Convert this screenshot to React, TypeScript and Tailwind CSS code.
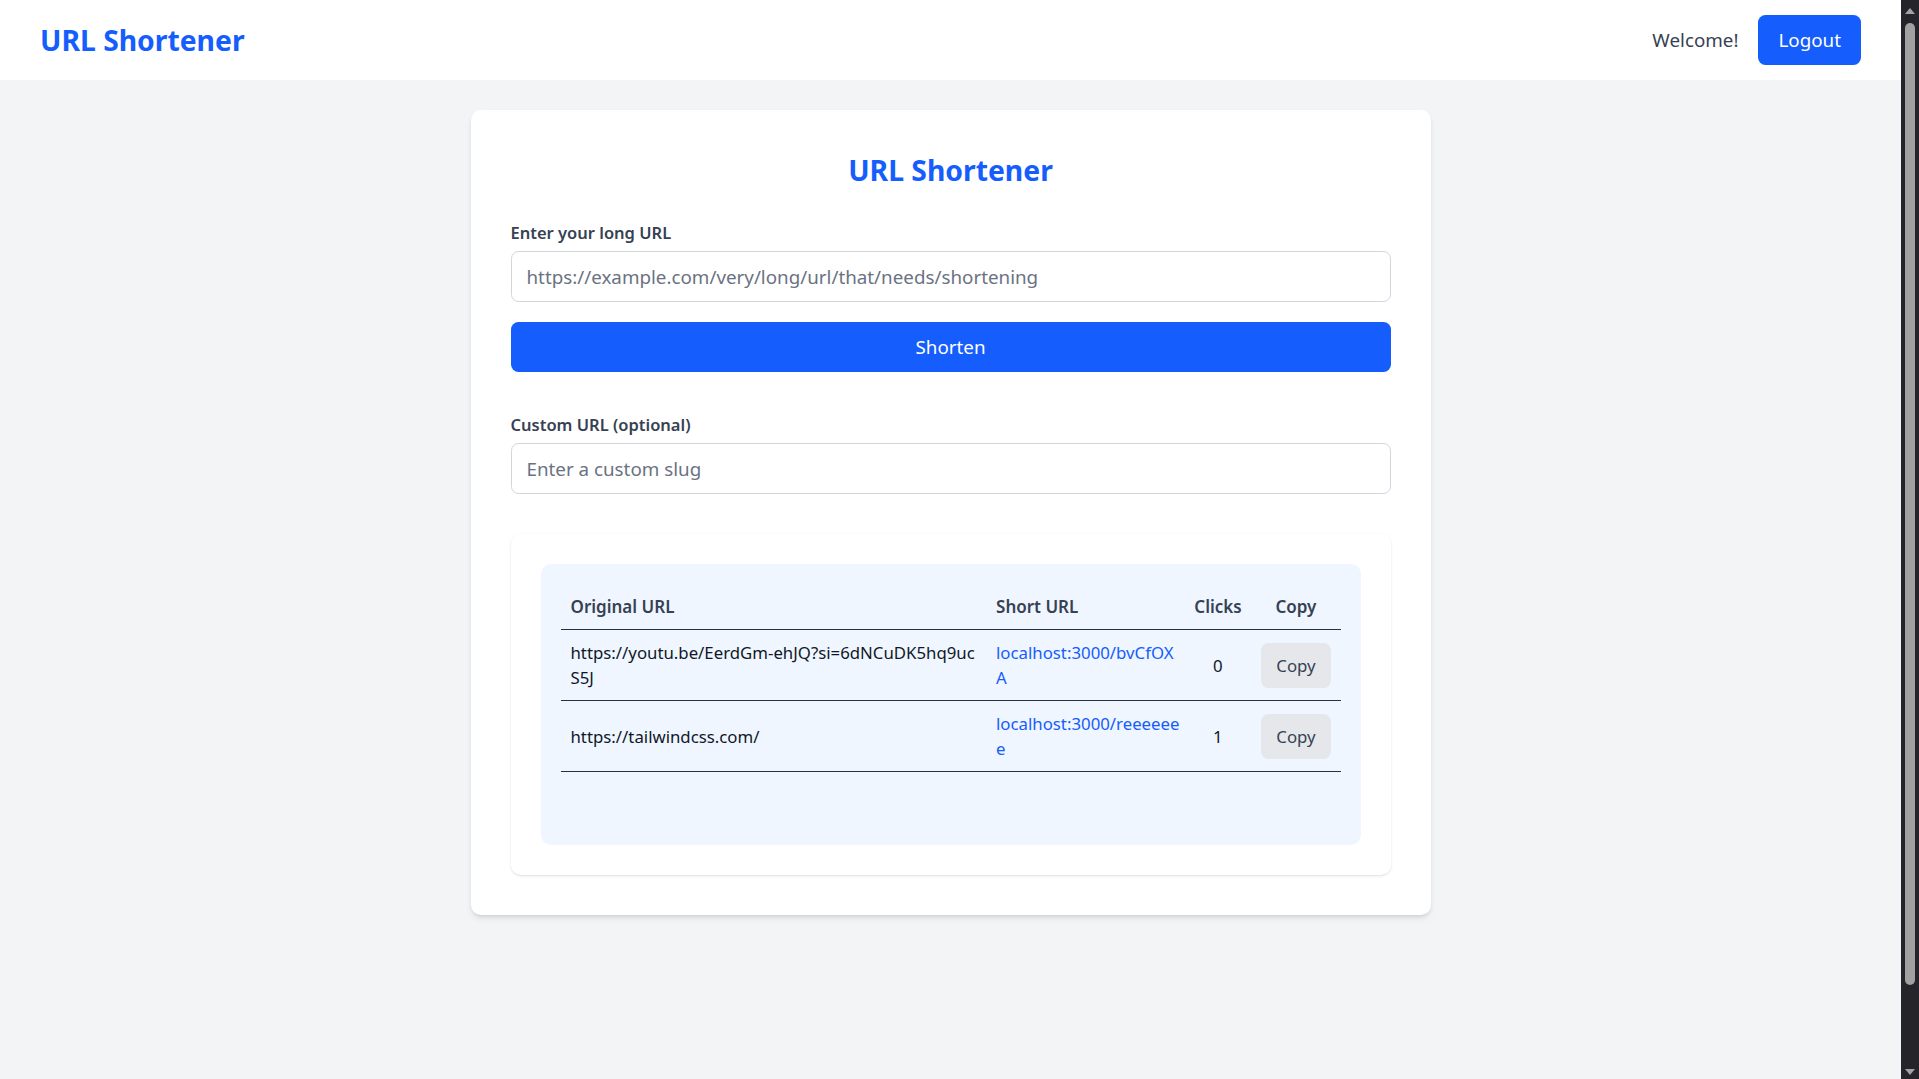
import React from "react";

const rows = [
  {
    original: ["https://youtu.be/EerdGm-ehJQ?si=6dNCuDK5hq9uc", "S5J"],
    short: ["localhost:3000/bvCfOX", "A"],
    clicks: 0,
  },
  {
    original: ["https://tailwindcss.com/"],
    short: ["localhost:3000/reeeeee", "e"],
    clicks: 1,
  },
];

function Scrollbar() {
  return (
    <div className="w-[18px] shrink-0 h-screen bg-[#25242a] flex flex-col items-center">
      <svg width="10" height="7" viewBox="0 0 10 7" className="mt-[7px]">
        <path d="M0 7 L5 1 L10 7 Z" fill="#a3a3a3" />
      </svg>
      <div className="mt-[9px] h-[962px] w-[10px] rounded-full bg-[#a1a1a1]" />
      <div className="flex-1" />
      <svg width="10" height="7" viewBox="0 0 10 7" className="mb-[3px]">
        <path d="M0 0 L10 0 L5 6 Z" fill="#a3a3a3" />
      </svg>
    </div>
  );
}

export default function App() {
  return (
    <div className="flex h-screen overflow-hidden bg-[#f3f4f6]">
      <div className="flex-1 min-w-0 h-screen overflow-hidden font-['Noto_Sans',sans-serif] text-gray-900">
        <nav className="h-20 bg-white px-10 flex items-center justify-between">
          <h1 className="text-[28.3px] leading-[40px] font-bold text-blue-600">URL Shortener</h1>
          <div className="flex items-center gap-5">
            <span className="text-[18.8px] leading-[30px] text-gray-700">Welcome!</span>
            <button className="bg-blue-600 text-white text-[18.8px] leading-[30px] px-5 py-2.5 rounded-[7.5px]">
              Logout
            </button>
          </div>
        </nav>
        <main className="min-h-screen pt-7.5 flex flex-col items-center">
          <div className="w-240 bg-white rounded-[10px] shadow-md p-10">
            <h2 className="text-[28.3px] leading-[40px] font-bold text-blue-600 text-center mb-7.5">
              URL Shortener
            </h2>
            <label className="block text-[16.5px] leading-[25px] font-semibold text-gray-700 mb-1.5">
              Enter your long URL
            </label>
            <input
              type="text"
              placeholder="https://example.com/very/long/url/that/needs/shortening"
              className="w-full h-[51px] border border-gray-300 rounded-[7.5px] px-[15px] text-[18.8px] placeholder:text-gray-500 outline-none"
            />
            <button className="mt-5 w-full h-[50px] bg-blue-600 text-white text-[18.8px] rounded-[7.5px]">
              Shorten
            </button>
            <label className="block mt-10 text-[16.5px] leading-[25px] font-semibold text-gray-700 mb-1.5">
              Custom URL (optional)
            </label>
            <input
              type="text"
              placeholder="Enter a custom slug"
              className="w-full h-[51px] border border-gray-300 rounded-[7.5px] px-[15px] text-[18.8px] placeholder:text-gray-500 outline-none"
            />
            <div className="mt-10 rounded-[10px] shadow-sm p-7.5">
              <div className="bg-blue-50 rounded-[10px] px-5 pt-5 pb-[73px]">
                <table className="w-full table-fixed border-collapse text-[16.8px] leading-[25px]">
                  <colgroup>
                    <col className="w-[425px]" />
                    <col className="w-[198px]" />
                    <col className="w-[67px]" />
                    <col className="w-[89px]" />
                  </colgroup>
                  <thead>
                    <tr className="border-b border-[#2b303b] text-gray-700">
                      <th className="px-2.5 py-2.5 text-left font-semibold text-[17px]">Original URL</th>
                      <th className="px-2.5 py-2.5 text-left font-semibold text-[17px]">Short URL</th>
                      <th className="px-2.5 py-2.5 text-center font-semibold text-[17px]">Clicks</th>
                      <th className="px-2.5 py-2.5 text-center font-semibold text-[17px]">Copy</th>
                    </tr>
                  </thead>
                  <tbody>
                    {rows.map((r, i) => (
                      <tr key={i} className="border-b border-[#2b303b]">
                        <td className="px-2.5 py-2.5 align-middle text-gray-900">
                          {r.original.map((l, j) => (
                            <span key={j} className="block whitespace-nowrap">{l}</span>
                          ))}
                        </td>
                        <td className="px-2.5 py-2.5 align-middle text-blue-600">
                          {r.short.map((l, j) => (
                            <span key={j} className="block whitespace-nowrap">{l}</span>
                          ))}
                        </td>
                        <td className="px-2.5 py-2.5 align-middle text-center text-gray-900">{r.clicks}</td>
                        <td className="px-2.5 py-2.5 align-middle text-center">
                          <button className="bg-gray-200 text-gray-700 px-[15px] py-2.5 rounded-[7.5px]">Copy</button>
                        </td>
                      </tr>
                    ))}
                  </tbody>
                </table>
              </div>
            </div>
          </div>
        </main>
      </div>
      <Scrollbar />
    </div>
  );
}
